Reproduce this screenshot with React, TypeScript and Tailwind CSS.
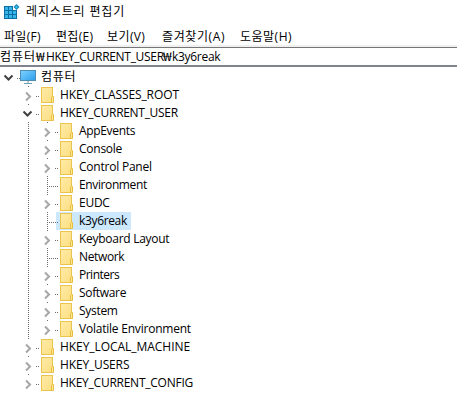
import React from "react";

type Kind = "open" | "closed" | "leaf";
type Row = { label: string; level: 1 | 2; kind: Kind; spacing: string; selected?: boolean };

const rows: Row[] = [
  { label: "HKEY_CLASSES_ROOT", level: 1, kind: "closed", spacing: "tracking-[-0.1px]" },
  { label: "HKEY_CURRENT_USER", level: 1, kind: "open", spacing: "tracking-[-0.3px]" },
  { label: "AppEvents", level: 2, kind: "closed", spacing: "tracking-[-0.33px]" },
  { label: "Console", level: 2, kind: "closed", spacing: "tracking-[-0.25px]" },
  { label: "Control Panel", level: 2, kind: "closed", spacing: "tracking-[-0.22px]" },
  { label: "Environment", level: 2, kind: "leaf", spacing: "tracking-[-0.38px]" },
  { label: "EUDC", level: 2, kind: "closed", spacing: "tracking-[-0.25px]" },
  { label: "k3y6reak", level: 2, kind: "leaf", spacing: "tracking-[-0.35px]", selected: true },
  { label: "Keyboard Layout", level: 2, kind: "closed", spacing: "tracking-[-0.28px]" },
  { label: "Network", level: 2, kind: "leaf", spacing: "tracking-[-0.36px]" },
  { label: "Printers", level: 2, kind: "closed", spacing: "tracking-[-0.5px]" },
  { label: "Software", level: 2, kind: "closed", spacing: "tracking-[-0.33px]" },
  { label: "System", level: 2, kind: "closed", spacing: "tracking-[-0.3px]" },
  { label: "Volatile Environment", level: 2, kind: "closed", spacing: "tracking-[-0.22px]" },
  { label: "HKEY_LOCAL_MACHINE", level: 1, kind: "closed", spacing: "tracking-[-0.05px]" },
  { label: "HKEY_USERS", level: 1, kind: "closed", spacing: "tracking-[-0.15px]" },
  { label: "HKEY_CURRENT_CONFIG", level: 1, kind: "closed", spacing: "tracking-[-0.25px]" },
];

function Dots({ d }: { d: string }) {
  return <path d={d} fill="none" stroke="#6e6e6e" strokeDasharray="1 1" shapeRendering="crispEdges" />;
}

/* 19px wide cell holding the expander and the dotted connector of one level */
function Branch({ kind }: { kind: Kind }) {
  return (
    <svg width="19" height="18" viewBox="0 0 19 18" className="relative z-10 shrink-0">
      {kind === "leaf" ? (
        <>
          <Dots d="M6.5 0V18" />
          <Dots d="M6 10.5H18" />
        </>
      ) : (
        <>
          <Dots d="M6.5 0V1" />
          <Dots d="M14 10.5H17" />
        </>
      )}
      {kind === "closed" && <path d="M4 6.5L8 10.5L4 14.5" fill="none" stroke="#a6a6a6" strokeWidth="2" />}
      {kind === "open" && <path d="M1.5 7.5L5.5 11.5L9.5 7.5" fill="none" stroke="#404040" strokeWidth="2" />}
    </svg>
  );
}

function Folder() {
  return (
    <svg width="14" height="18" viewBox="0 0 14 18" className="shrink-0">
      <defs>
        <linearGradient id="folder" x1="0" y1="0" x2="1" y2="1">
          <stop offset="0" stopColor="#ffeba8" />
          <stop offset="1" stopColor="#fddf82" />
        </linearGradient>
      </defs>
      <rect x="0.5" y="1.5" width="11" height="15" fill="url(#folder)" stroke="#e9c44f" />
      <path d="M10.5 16.5V11.5L11.2 10.5H12.5V16.5Z" fill="#ffe794" stroke="#e6bd3e" />
    </svg>
  );
}

function Monitor() {
  return (
    <svg width="17" height="18" viewBox="0 0 17 18" className="shrink-0">
      <defs>
        <linearGradient id="screen" x1="0" y1="0" x2="1" y2="1">
          <stop offset="0" stopColor="#7fd0fb" />
          <stop offset="0.5" stopColor="#55b9f7" />
          <stop offset="1" stopColor="#2e9bea" />
        </linearGradient>
      </defs>
      <rect x="0.5" y="2.5" width="15" height="10" fill="url(#screen)" stroke="#4d8db3" />
      <rect x="7" y="13" width="2" height="2" fill="#b9c7cf" />
      <rect x="4" y="15" width="8" height="1" fill="#6f9fba" />
    </svg>
  );
}

function RegistryIcon() {
  return (
    <svg width="17" height="17" viewBox="0 0 17 17" className="shrink-0">
      <path d="M0 2H9V6H13V15H0Z" fill="#0b6fa3" />
      <g fill="#35b5e8">
        <rect x="1" y="3" width="3" height="3" />
        <rect x="5" y="3" width="3" height="3" />
        <rect x="1" y="7" width="3" height="3" />
        <rect x="5" y="7" width="3" height="3" />
        <rect x="9" y="7" width="3" height="3" />
        <rect x="1" y="11" width="3" height="3" />
        <rect x="5" y="11" width="3" height="3" />
        <rect x="9" y="11" width="3" height="3" />
      </g>
      <path d="M12.5 0L15.5 3L12.5 6L9.5 3Z" fill="#1387bd" />
      <path d="M12.5 1.5L14 3L12.5 4.5L11 3Z" fill="#42bced" />
    </svg>
  );
}

const menus = [
  { label: "파일(F)", cls: "w-[52px] tracking-[0.3px]" },
  { label: "편집(E)", cls: "w-[51px] tracking-[0.3px]" },
  { label: "보기(V)", cls: "w-[55px] tracking-[0.4px]" },
  { label: "즐겨찾기(A)", cls: "w-[78px] tracking-[0.6px]" },
  { label: "도움말(H)", cls: "w-[60px] tracking-[0.5px]" },
];

export default function App() {
  return (
    <div className="h-[408px] w-[457px] overflow-hidden bg-white text-[12px] leading-[18px] whitespace-nowrap text-black [font-family:'Open_Sans','Noto_Sans_CJK_KR',sans-serif]">
      <header className="flex h-[28px] pt-[4px] pl-[4px]">
        <RegistryIcon />
        <h1 className="-mt-[1px] ml-[5px] tracking-[0.85px]">레지스트리 편집기</h1>
      </header>
      <nav className="flex h-[17px] pl-[4px]">
        {menus.map((m) => (
          <span key={m.label} className={m.cls}>{m.label}</span>
        ))}
      </nav>
      <div className="h-[2px] bg-[#efefef]" />
      <div className="flex h-[20px] border-t border-b-2 border-t-[#767676] border-b-[#80838c] leading-[17px]">
        <span className="w-[36px] tracking-[0.9px]">컴퓨터</span>
        <span className="w-[10px] origin-left scale-x-[1.3]"><span className="block w-[7px]">₩</span></span>
        <span className="w-[117px] tracking-[-0.3px]">HKEY_CURRENT_USER</span>
        <span className="w-[9px] origin-left scale-x-[1.3]"><span className="block w-[7px]">₩</span></span>
        <span className="tracking-[-0.3px]">k3y6reak</span>
      </div>
      <main className="pt-[1px]">
        <div className="flex h-[18px]">
          <svg width="20" height="18" viewBox="0 0 20 18" className="shrink-0">
            <path d="M4.5 7.5L8.5 11.5L12.5 7.5" fill="none" stroke="#404040" strokeWidth="2" />
            <Dots d="M17 10.5H20" />
          </svg>
          <Monitor />
          <span className="pl-[4px] tracking-[0.7px]">컴퓨터</span>
        </div>
        {rows.map((r) => (
          <div key={r.label} className="flex h-[18px] pl-[22px]">
            {r.level === 2 && (
              <svg width="19" height="18" viewBox="0 0 19 18" className="shrink-0">
                <Dots d="M6.5 0V18" />
              </svg>
            )}
            <Branch kind={r.kind} />
            <div className={r.selected ? "-ml-[4px] flex bg-[#cce8ff] pr-[4px] pl-[4px]" : "flex"}>
              <Folder />
              <span className={`pl-[5px] ${r.spacing}`}>{r.label}</span>
            </div>
          </div>
        ))}
      </main>
    </div>
  );
}
